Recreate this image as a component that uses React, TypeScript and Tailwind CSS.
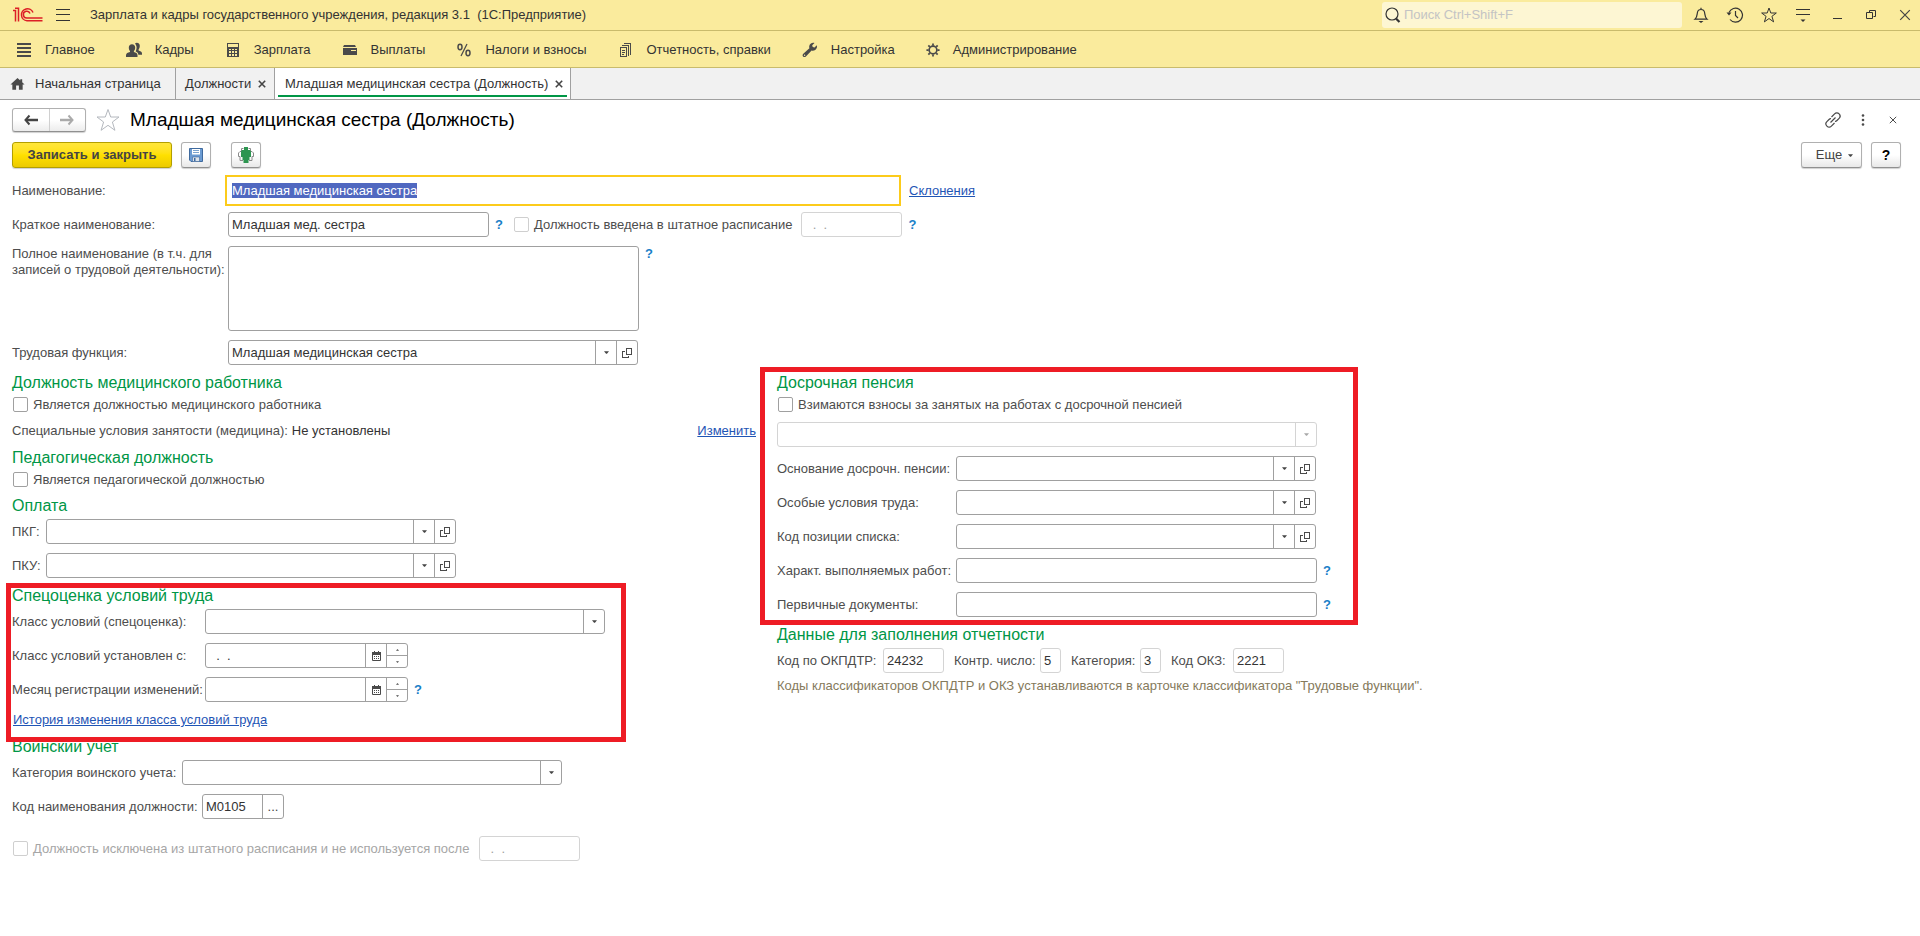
import { useEffect, useRef, useState } from "react";
import type { ReactNode } from "react";

/* ---------- icons ---------- */

function LogoIcon() {
  return (
    <svg width="30" height="16" viewBox="0 0 30 16" fill="none" stroke="#dc1f26" strokeWidth="1.5">
      <path d="M0 3.5h2.5v11M2 1.2h3.5v13.3" />
      <path d="M20 5.5A6 6 0 1 0 14 13.8H29.5" />
      <path d="M17 6.5A3.4 3.4 0 1 0 14 11H29.5" />
    </svg>
  );
}

function BurgerIcon() {
  return (
    <svg width="14" height="12" viewBox="0 0 14 12" stroke="#333" strokeWidth="1">
      <path d="M0 .5h14M0 5.5h14M0 11.5h14" />
    </svg>
  );
}

function MainIcon() {
  return (
    <svg width="16" height="16" viewBox="0 0 16 16" stroke="#4a4a4a" strokeWidth="2">
      <path d="M1 2h14M1 6h14M1 10h14M1 14h14" />
    </svg>
  );
}

function PeopleIcon() {
  return (
    <svg width="16" height="16" viewBox="0 0 16 16" fill="#4a4a4a">
      <path d="M9 1.500C10 .2 13.800.2 13.800 3.800c0 1.800-.6 3-1.200 3.600v1c1.600.6 3.400 1.200 3.400 3v1.400h-3.600c-.2-1.900-1.400-2.700-2.600-3.200-.3-.6.800-1.600.8-4C10.600 3.500 9.700 2.500 9 1.500z" />
      <path d="M6 2.200c2 0 3.200 1.300 3.200 3.400 0 1.700-.7 2.900-1.300 3.500v1c2 .6 3.600 1.200 3.600 3.200V15H0v-1.700c0-2 1.800-2.600 4-3.200v-1C3.400 8.500 2.800 7.300 2.800 5.600c0-2.100 1.200-3.400 3.200-3.400z" />
    </svg>
  );
}

function CalculatorIcon() {
  return (
    <svg width="16" height="16" viewBox="0 0 16 16">
      <path
        fill="#4a4a4a"
        fillRule="evenodd"
        d="M2 1h12v14H2zM3 2v3h10V2zM4 7v1h2V7zM7 7v1h2V7zM10 7v1h2V7zM4 9v2h2V9zM7 9v2h2V9zM10 9v2h2V9zM4 12v2h2v-2zM7 12v2h2v-2zM10 12v2h2v-2z"
      />
    </svg>
  );
}

function WalletIcon() {
  return (
    <svg width="16" height="16" viewBox="0 0 16 16">
      <path fill="#4a4a4a" d="M2 3h11l1 2H1zM1 6h14v7H1z" />
      <path fill="#faeb9d" d="M9 8h5v1H9z" />
    </svg>
  );
}

function PercentIcon() {
  return (
    <svg width="16" height="16" viewBox="0 0 16 16" fill="none" stroke="#4a4a4a">
      <ellipse cx="4" cy="5" rx="2" ry="2.700" strokeWidth="1.500" />
      <ellipse cx="12" cy="11" rx="2" ry="2.700" strokeWidth="1.500" />
      <path d="M11 2 5 14" strokeWidth="1.300" />
    </svg>
  );
}

function ReportsIcon() {
  return (
    <svg width="16" height="16" viewBox="0 0 16 16" fill="none" stroke="#4a4a4a" shapeRendering="crispEdges">
      <path d="M2.500 5.500h6v9h-6zM4 3.500h6.500V14M6 1.500h6.500V13" />
      <path d="M4 8.500h3M4 10.500h3M4 12.500h2" />
    </svg>
  );
}

function WrenchIcon() {
  return (
    <svg width="16" height="16" viewBox="0 0 16 16" fill="#4a4a4a">
      <path d="M14.800 3.200 12.500 5.500 10.700 5l-.5-1.700L12.500 1C10.300.3 7.600 1.500 7.200 4.300c-.1.700 0 1.300.2 1.900L1.300 11.800c-1 1-.8 2.200-.2 2.800.7.7 2 .7 2.800-.2l5.700-6c3 1.100 6.200-1.600 5.200-5.200zM2.600 14a.7.7 0 1 1 0-1.400.7.7 0 0 1 0 1.400z" />
    </svg>
  );
}

function GearIcon() {
  return (
    <svg width="14" height="16" viewBox="0 0 16 16" fill="none" stroke="#4a4a4a">
      <circle cx="8" cy="8" r="4.400" strokeWidth="1.900" />
      <path
        strokeWidth="2"
        d="M8 .5v2.500M8 13v2.500M.5 8h2.500M13 8h2.500M2.700 2.700l1.600 1.600M11.700 11.700l1.600 1.600M2.700 13.300l1.600-1.600M11.700 4.300l1.600-1.600"
      />
    </svg>
  );
}

function HomeIcon() {
  return (
    <svg width="15" height="14" viewBox="0 0 16 14" fill="#4a4a4a">
      <path d="M8 .5.500 7.500h2V13H6.500V8.500h3V13h4V7.500h2L13 5V2h-2v1.200z" />
    </svg>
  );
}

function SearchIcon() {
  return (
    <svg width="16" height="16" viewBox="0 0 16 16" fill="none" stroke="#333">
      <circle cx="7" cy="7" r="6" strokeWidth="1.200" />
      <path d="M11 11.500 14.500 15" strokeWidth="2.200" />
    </svg>
  );
}

function BellIcon() {
  return (
    <svg width="16" height="16" viewBox="0 0 16 16" fill="none" stroke="#333" strokeWidth="1.200">
      <path d="M8 .8v1.500M2 12.200c2-1.700 2-3.500 2.300-6C4.500 3.800 6 2.500 8 2.500s3.500 1.300 3.700 3.700c.3 2.500.3 4.300 2.300 6z" />
      <path d="M5.500 14h5L8 16z" fill="#333" stroke="none" />
    </svg>
  );
}

function HistoryIcon() {
  return (
    <svg width="18" height="16" viewBox="0 0 18 16" fill="none" stroke="#333" strokeWidth="1.200">
      <path d="M3 5.500A7 7 0 1 1 4 12.500" />
      <path d="M9.500 4v4.500l2.500 2.500" />
      <path d="M.5 5.500h5L3 8.500z" fill="#333" stroke="none" />
    </svg>
  );
}

function StarIcon({ size, color }: { size: number; color: string }) {
  return (
    <svg width={size} height={size} viewBox="0 0 24 24" fill="none" stroke={color} strokeWidth={size > 20 ? 1 : 1.5}>
      <path d="M12 1.500 14.700 9h8.300l-6.600 5 2.500 8.300L12 17.300l-6.900 5L7.600 14 1 9h8.300z" />
    </svg>
  );
}

function ServiceMenuIcon() {
  return (
    <svg width="16" height="16" viewBox="0 0 16 16" stroke="#333" strokeWidth="1">
      <path d="M1 2.500h14M1 7.500h14" />
      <path d="M5.500 12.500h5L8 15z" fill="#333" stroke="none" />
    </svg>
  );
}

function MinimizeIcon() {
  return (
    <svg width="10" height="10" viewBox="0 0 10 10" stroke="#333">
      <path d="M1 8.500h9" />
    </svg>
  );
}

function RestoreIcon() {
  return (
    <svg width="10" height="10" viewBox="0 0 10 10" fill="none" stroke="#333">
      <path d="M3.500 2.500v-2h6v6h-2M.5 2.500h6v6h-6z" />
    </svg>
  );
}

function CrossIcon({ size, width }: { size: number; width: number }) {
  return (
    <svg width={size} height={size} viewBox="0 0 10 10" stroke="#444" strokeWidth={width}>
      <path d="m1 1 8 8M9 1 1 9" />
    </svg>
  );
}

function ArrowIcon({ flip, color }: { flip?: boolean; color: string }) {
  return (
    <svg width="14" height="12" viewBox="0 0 14 12" fill="none" stroke={color} className={flip ? "rotate-180" : ""}>
      <path d="M2 6h12" strokeWidth="2.500" />
      <path d="M5.500 1.500 1.500 6l4 4.500" strokeWidth="2" />
    </svg>
  );
}

function SaveIcon() {
  return (
    <svg width="16" height="16" viewBox="0 0 16 16">
      <path d="M1.500 1.500h13v13H3l-1.500-1.500z" fill="#6b9bd2" stroke="#3f6a9e" />
      <path d="M4 2h8v5.500H4z" fill="#fff" />
      <path d="M5 3.500h6M5 5.500h6" stroke="#7aa3cf" />
      <path d="M4.500 10h7v4.500h-7z" fill="#dde3ea" stroke="#3f6a9e" strokeWidth=".6" />
      <path d="M6 11h1.500v3H6z" fill="#3f6a9e" />
    </svg>
  );
}

function StaffIcon() {
  return (
    <svg width="16" height="16" viewBox="0 0 16 16">
      <g fill="none" stroke="#8a8a8a">
        <path d="M5.500 1.500h-2v3H2L.5 6v3.500H2v4h3M10.500 1.500h2v3H14L15.500 6v3.500H14v4h-3" />
      </g>
      <path d="M6 0h4v3h2l1 1.500V10h-1.500v3H10.500v3h-5v-3h-1v-3H3V4.500L4 3h2z" fill="#2d9550" />
    </svg>
  );
}

function LinkIcon() {
  return (
    <svg width="16" height="16" viewBox="0 0 16 16" fill="none" stroke="#4a4a4a" strokeWidth="1.200">
      <path d="M6.500 5 9.600 1.900a3 3 0 0 1 4.500 4.500L12 8.500q-1 1-2 .8" />
      <path d="M9.500 11 6.400 14.100a3 3 0 0 1-4.500-4.500L4 7.500q1-1 2-.8M5.500 10.500l5-5" />
    </svg>
  );
}

function DotsIcon() {
  return (
    <svg width="4" height="12" viewBox="0 0 4 12" fill="#4a4a4a">
      <circle cx="2" cy="1.500" r="1.300" />
      <circle cx="2" cy="6" r="1.300" />
      <circle cx="2" cy="10.500" r="1.300" />
    </svg>
  );
}

function TriangleIcon({ up, small }: { up?: boolean; small?: boolean }) {
  return (
    <svg width={small ? 3 : 5} height={small ? 2 : 3} viewBox="0 0 6 3" fill="currentColor" className={up ? "rotate-180" : ""}>
      <path d="M0 0h6L3.500 3h-1z" />
    </svg>
  );
}

function OpenIcon() {
  return (
    <svg width="10" height="10" viewBox="0 0 10 10" fill="none" stroke="#4a4a4a" shapeRendering="crispEdges">
      <path d="M4.500.5h5v6h-5zM3 3.500H.5v6h6V8" />
    </svg>
  );
}

function CalendarIcon() {
  return (
    <svg width="9" height="10" viewBox="0 0 9 10">
      <path d="M.5 1.500h8v8h-8z" fill="#fff" stroke="#4a4a4a" />
      <path d="M0 1h9v3H0zM2 0h1v1H2zM6 0h1v1H6z" fill="#4a4a4a" />
      <path d="M2 5.500h1M4 5.500h1M6 5.500h1M2 7.500h1M4 7.500h1M6 7.500h1" stroke="#4a4a4a" />
    </svg>
  );
}

/* ---------- form parts ---------- */

const boxClass = "flex h-[25px] shrink-0 rounded-[3px] border bg-white";
const inputClass = "min-w-0 flex-1 bg-transparent pl-[3px] outline-none";

type FieldProps = {
  id: string;
  label?: string;
  width: string;
  value?: string;
  disabled?: boolean;
  pale?: boolean;
  dropdown?: boolean;
  open?: boolean;
  calendar?: boolean;
  more?: boolean;
};

function Field({ id, label, width, value = "", disabled, pale, dropdown, open, calendar, more }: FieldProps) {
  const light = disabled || pale;
  const border = light ? "border-[#d4d4d4]" : "border-[#a0a0a0]";
  const side = `flex w-[21px] items-center justify-center border-l ${border} ${disabled ? "text-[#a8a8a8]" : "text-[#444]"}`;

  return (
    <div className={`${boxClass} ${border} ${width}`}>
      <input id={id} aria-label={label} defaultValue={value} disabled={disabled} className={`${inputClass} ${disabled ? "text-[#a0a0a0]" : "text-[#333]"}`} />
      {dropdown && (
        <button type="button" aria-label="Выбрать" disabled={disabled} className={side}>
          <TriangleIcon />
        </button>
      )}
      {open && (
        <button type="button" aria-label="Открыть" className={side}>
          <OpenIcon />
        </button>
      )}
      {more && (
        <button type="button" className={side}>...</button>
      )}
      {calendar && (
        <>
          <button type="button" aria-label="Календарь" className={side}>
            <CalendarIcon />
          </button>
          <div className={`flex w-[21px] flex-col border-l ${border}`}>
            <button type="button" aria-label="Больше" className="flex flex-1 items-center justify-center border-b border-[#a0a0a0]">
              <TriangleIcon up small />
            </button>
            <button type="button" aria-label="Меньше" className="flex flex-1 items-center justify-center">
              <TriangleIcon small />
            </button>
          </div>
        </>
      )}
    </div>
  );
}

function Row({ id, label, labelWidth = "", children }: { id: string; label: string; labelWidth?: string; children: ReactNode }) {
  return (
    <div className="flex items-center">
      <label htmlFor={id} className={`shrink-0 whitespace-nowrap ${labelWidth}`}>{label}</label>
      {children}
    </div>
  );
}

function Check({ label, disabled, faded }: { label: string; disabled?: boolean; faded?: boolean }) {
  return (
    <label className={`flex h-[15px] items-center gap-[5px] whitespace-nowrap ${faded ? "text-[#a6a6a6]" : ""}`}>
      <input
        type="checkbox"
        disabled={disabled}
        className={`size-[15px] shrink-0 appearance-none rounded-[2px] border bg-white checked:bg-[#009646] ${disabled ? "border-[#cfcfcf]" : "border-[#a0a0a0]"}`}
      />
      {label}
    </label>
  );
}

function Heading({ children }: { children: ReactNode }) {
  return <h2 className="h-5 text-base leading-5 whitespace-nowrap text-[#009646]">{children}</h2>;
}

function Help() {
  return <button type="button" aria-label="Справка" className="ml-[6px] w-2 font-bold text-[#1a80c8]">?</button>;
}

const toolButton =
  "flex h-[26px] items-center justify-center rounded-[3px] border border-[#b0b0b0] border-b-[#909090] bg-linear-to-b from-white from-50% to-[#e8e8e8] shadow-[0_1px_1px_#d0d0d0]";

/* ---------- window ---------- */

const menu = [
  { label: "Главное", icon: <MainIcon /> },
  { label: "Кадры", icon: <PeopleIcon /> },
  { label: "Зарплата", icon: <CalculatorIcon /> },
  { label: "Выплаты", icon: <WalletIcon /> },
  { label: "Налоги и взносы", icon: <PercentIcon /> },
  { label: "Отчетность, справки", icon: <ReportsIcon /> },
  { label: "Настройка", icon: <WrenchIcon /> },
  { label: "Администрирование", icon: <GearIcon /> },
];

const windowButtons = [
  { label: "Уведомления", icon: <BellIcon /> },
  { label: "История", icon: <HistoryIcon /> },
  { label: "Избранное", icon: <StarIcon size={16} color="#333" /> },
  { label: "Сервис", icon: <ServiceMenuIcon /> },
  { label: "Свернуть", icon: <MinimizeIcon /> },
  { label: "Развернуть", icon: <RestoreIcon /> },
  { label: "Закрыть", icon: <CrossIcon size={12} width={1} /> },
];

function TitleBar() {
  return (
    <header className="flex h-[31px] items-center border-b border-[#c9bb6c] bg-[#faeb9d] pr-[5px] pl-[13px]">
      <LogoIcon />
      <button type="button" aria-label="Меню" className="ml-[13px]">
        <BurgerIcon />
      </button>
      <div className="ml-5 whitespace-pre text-[#333]">Зарплата и кадры государственного учреждения, редакция 3.1  (1С:Предприятие)</div>
      <label className="ml-auto flex h-[26px] w-[300px] items-center gap-[3px] rounded-[3px] bg-[#fdf6d3] pl-[3px]">
        <SearchIcon />
        <input type="search" aria-label="Поиск" placeholder="Поиск Ctrl+Shift+F" className="min-w-0 flex-1 bg-transparent outline-none placeholder:text-[#c4c4c4]" />
      </label>
      <div className="ml-[9px] flex gap-[14px]">
        {windowButtons.map((b) => (
          <button key={b.label} type="button" aria-label={b.label} className="flex size-5 items-center justify-center">
            {b.icon}
          </button>
        ))}
      </div>
    </header>
  );
}

function MenuBar() {
  return (
    <nav className="flex h-[37px] items-center gap-[31px] border-b border-[#c9bb6c] bg-[#faeb9d] px-4 pt-[2px] text-[#333]">
      {menu.map((m) => (
        <button key={m.label} type="button" className="flex items-center gap-[13px] whitespace-nowrap">
          {m.icon}
          {m.label}
        </button>
      ))}
    </nav>
  );
}

function TabBar() {
  return (
    <div className="flex h-8 border-b border-[#a0a0a0] bg-[#f1f1f1] text-[#333]">
      <button type="button" className="flex w-[176px] items-center gap-[10px] border-r border-[#a0a0a0] pl-[10px]">
        <HomeIcon />
        Начальная страница
      </button>
      <div className="flex w-[99px] items-center justify-between border-r border-[#a0a0a0] pr-2 pl-[9px]">
        <button type="button">Должности</button>
        <button type="button" aria-label="Закрыть вкладку">
          <CrossIcon size={8} width={2} />
        </button>
      </div>
      <div className="w-[296px] border-r border-[#a0a0a0] bg-white px-[3px] pb-[2px]">
        <div className="flex h-full items-center justify-between border-b-2 border-[#009646] pt-1 pr-1 pl-[7px]">
          <button type="button">Младшая медицинская сестра (Должность)</button>
          <button type="button" aria-label="Закрыть вкладку">
            <CrossIcon size={8} width={2} />
          </button>
        </div>
      </div>
    </div>
  );
}

function FormHeader() {
  return (
    <>
      <div className="flex h-6 items-center">
        <div className="flex h-6 w-[74px] rounded-[3px] border border-[#b0b0b0] border-b-[#909090] bg-linear-to-b from-white from-50% to-[#ececec] shadow-[0_1px_1px_#d0d0d0]">
          <button type="button" aria-label="Назад" className="flex flex-1 items-center justify-center border-r border-[#d0d0d0]">
            <ArrowIcon color="#444" />
          </button>
          <button type="button" aria-label="Вперед" className="flex flex-1 items-center justify-center">
            <ArrowIcon flip color="#aaa" />
          </button>
        </div>
        <button type="button" aria-label="В избранное" className="ml-[10px]">
          <StarIcon size={24} color="#b4b8be" />
        </button>
        <h1 className="ml-[10px] text-[19px] whitespace-nowrap text-black">Младшая медицинская сестра (Должность)</h1>
        <div className="ml-auto flex items-center gap-[10px] pr-[5px]">
          <button type="button" aria-label="Ссылка" className="flex size-5 items-center justify-center">
            <LinkIcon />
          </button>
          <button type="button" aria-label="Действия" className="flex size-5 items-center justify-center">
            <DotsIcon />
          </button>
          <button type="button" aria-label="Закрыть" className="flex size-5 items-center justify-center">
            <CrossIcon size={8} width={1.2} />
          </button>
        </div>
      </div>

      <div className="mt-[10px] flex h-[26px]">
        <button
          type="button"
          className="h-[26px] w-40 rounded-[3px] border border-[#b39f00] bg-linear-to-b from-[#ffe63a] via-[#ffe000] to-[#ecca00] font-bold whitespace-nowrap text-[#444] shadow-[0_1px_1px_#d0d0d0]"
        >
          Записать и закрыть
        </button>
        <button type="button" aria-label="Записать" className={`${toolButton} ml-[9px] w-[30px]`}>
          <SaveIcon />
        </button>
        <button type="button" aria-label="Сотрудники" className={`${toolButton} ml-5 w-[30px]`}>
          <StaffIcon />
        </button>
        <button type="button" className={`${toolButton} ml-auto w-[61px] gap-[6px] pl-[6px] text-[#444]`}>
          Еще
          <TriangleIcon />
        </button>
        <button type="button" aria-label="Справка" className={`${toolButton} mr-[7px] ml-[9px] w-[30px] text-sm font-bold text-black`}>?</button>
      </div>
    </>
  );
}

function MainFields() {
  const nameRef = useRef<HTMLInputElement>(null);
  const [name, setName] = useState("Младшая медицинская сестра");

  useEffect(() => {
    nameRef.current?.focus();
    nameRef.current?.select();
  }, []);

  return (
    <>
      <div className="mt-[7px] flex h-[31px] items-center">
        <label htmlFor="name" className="w-[213px] shrink-0">Наименование:</label>
        <input
          ref={nameRef}
          id="name"
          value={name}
          onChange={(e) => setName(e.target.value)}
          className="h-[31px] w-[676px] border-2 border-[#fccb1b] bg-white pl-[5px] text-[#333] outline-none selection:bg-[#5068c0] selection:text-white"
        />
        <a href="#" className="ml-2 text-[#1f55b5] underline">Склонения</a>
      </div>

      <div className="mt-[6px] flex items-center">
        <label htmlFor="short" className="w-[216px] shrink-0">Краткое наименование:</label>
        <Field id="short" width="w-[261px]" value="Младшая мед. сестра" />
        <Help />
        <div className="ml-[11px]">
          <Check label="Должность введена в штатное расписание" disabled />
        </div>
        <div className="ml-[9px]">
          <Field id="inStaffDate" label="Дата ввода" width="w-[101px]" value="  .  ." disabled />
        </div>
        <Help />
      </div>

      <div className="mt-[9px] flex items-start">
        <label htmlFor="full" className="w-[216px] shrink-0 leading-4 whitespace-pre-line">
          {"Полное наименование (в т.ч. для\nзаписей о трудовой деятельности):"}
        </label>
        <textarea id="full" className="h-[85px] w-[411px] resize-none rounded-[3px] border border-[#a0a0a0] px-1 outline-none" />
        <Help />
      </div>

      <div className="mt-[9px]">
        <Row id="function" label="Трудовая функция:" labelWidth="w-[216px]">
          <Field id="function" width="w-[410px]" value="Младшая медицинская сестра" dropdown open />
        </Row>
      </div>
    </>
  );
}

function LeftColumn() {
  return (
    <div>
      <Heading>Должность медицинского работника</Heading>
      <div className="mt-1 ml-px">
        <Check label="Является должностью медицинского работника" />
      </div>
      <div className="mt-[10px] flex h-[18px] items-center pr-[10px]">
        <span>Специальные условия занятости (медицина):</span>
        <span className="ml-1 text-[#333]">Не установлены</span>
        <a href="#" className="ml-auto text-[#1f55b5] underline">Изменить</a>
      </div>

      <div className="mt-2">
        <Heading>Педагогическая должность</Heading>
        <div className="mt-1 ml-px">
          <Check label="Является педагогической должностью" />
        </div>
      </div>

      <div className="mt-[9px]">
        <Heading>Оплата</Heading>
        <div className="mt-[3px] flex flex-col gap-[9px]">
          <Row id="pkg" label="ПКГ:" labelWidth="w-[34px]">
            <Field id="pkg" width="w-[410px]" dropdown open />
          </Row>
          <Row id="pku" label="ПКУ:" labelWidth="w-[34px]">
            <Field id="pku" width="w-[410px]" dropdown open />
          </Row>
        </div>
      </div>

      <section className="relative mt-2">
        <div className="pointer-events-none absolute -top-[3px] -left-[6px] z-10 h-[159px] w-[620px] border-[5px] border-[#ee1c25]" />
        <Heading>Спецоценка условий труда</Heading>
        <div className="mt-[3px] flex flex-col gap-[9px]">
          <Row id="class" label="Класс условий (спецоценка):" labelWidth="w-[193px]">
            <Field id="class" width="w-[400px]" dropdown />
          </Row>
          <Row id="classDate" label="Класс условий установлен с:" labelWidth="w-[193px]">
            <Field id="classDate" width="w-[203px]" value="  .  ." calendar />
          </Row>
          <Row id="month" label="Месяц регистрации изменений:" labelWidth="w-[193px]">
            <Field id="month" width="w-[203px]" calendar />
            <Help />
          </Row>
          <a href="#" className="ml-px h-[18px] self-start leading-[18px] text-[#1f55b5] underline">История изменения класса условий труда</a>
        </div>
      </section>

      <div className="mt-2">
        <Heading>Воинский учет</Heading>
        <div className="mt-[3px] flex flex-col gap-[9px]">
          <Row id="military" label="Категория воинского учета:" labelWidth="w-[170px]">
            <Field id="military" width="w-[380px]" dropdown />
          </Row>
          <Row id="code" label="Код наименования должности:" labelWidth="w-[190px]">
            <Field id="code" width="w-[82px]" value="М0105" more />
          </Row>
        </div>
      </div>

      <div className="mt-[17px] ml-px flex items-center gap-[10px]">
        <Check label="Должность исключена из штатного расписания и не используется после" disabled faded />
        <Field id="excludedDate" label="Дата исключения" width="w-[101px]" value="  .  ." disabled />
      </div>
    </div>
  );
}

function RightColumn() {
  return (
    <div>
      <section className="relative">
        <div className="pointer-events-none absolute -top-[6px] -left-[17px] z-10 h-[258px] w-[598px] border-[5px] border-[#ee1c25]" />
        <Heading>Досрочная пенсия</Heading>
        <div className="mt-1 ml-px">
          <Check label="Взимаются взносы за занятых на работах с досрочной пенсией" />
        </div>
        <div className="mt-[10px] flex flex-col gap-[9px]">
          <Field id="pensionKind" label="Вид работ с досрочной пенсией" width="w-[540px]" disabled dropdown />
          <Row id="basis" label="Основание досрочн. пенсии:" labelWidth="w-[179px]">
            <Field id="basis" width="w-[360px]" dropdown open />
          </Row>
          <Row id="special" label="Особые условия труда:" labelWidth="w-[179px]">
            <Field id="special" width="w-[360px]" dropdown open />
          </Row>
          <Row id="position" label="Код позиции списка:" labelWidth="w-[179px]">
            <Field id="position" width="w-[360px]" dropdown open />
          </Row>
          <Row id="works" label="Характ. выполняемых работ:" labelWidth="w-[179px]">
            <Field id="works" width="w-[361px]" />
            <Help />
          </Row>
          <Row id="docs" label="Первичные документы:" labelWidth="w-[179px]">
            <Field id="docs" width="w-[361px]" />
            <Help />
          </Row>
        </div>
      </section>

      <div className="mt-2">
        <Heading>Данные для заполнения отчетности</Heading>
        <div className="mt-[3px] flex gap-[10px]">
          <Row id="okpdtr" label="Код по ОКПДТР:" labelWidth="w-[106px]">
            <Field id="okpdtr" width="w-[61px]" value="24232" pale />
          </Row>
          <Row id="control" label="Контр. число:" labelWidth="w-[86px]">
            <Field id="control" width="w-[21px]" value="5" pale />
          </Row>
          <Row id="category" label="Категория:" labelWidth="w-[69px]">
            <Field id="category" width="w-[21px]" value="3" pale />
          </Row>
          <Row id="okz" label="Код ОКЗ:" labelWidth="w-[62px]">
            <Field id="okz" width="w-[51px]" value="2221" pale />
          </Row>
        </div>
        <p className="mt-1 h-[18px] leading-[18px] whitespace-nowrap text-[#857a5c]">
          Коды классификаторов ОКПДТР и ОКЗ устанавливаются в карточке классификатора "Трудовые функции".
        </p>
      </div>
    </div>
  );
}

export default function App() {
  return (
    <div className="min-h-screen bg-white font-['Liberation_Sans',Arial,sans-serif] text-[13px] leading-4 text-[#4d4d4d]">
      <TitleBar />
      <MenuBar />
      <TabBar />
      <main className="px-3 pt-2">
        <FormHeader />
        <MainFields />
        <div className="mt-2 grid grid-cols-[2fr_3fr] gap-[11px]">
          <LeftColumn />
          <RightColumn />
        </div>
      </main>
    </div>
  );
}
